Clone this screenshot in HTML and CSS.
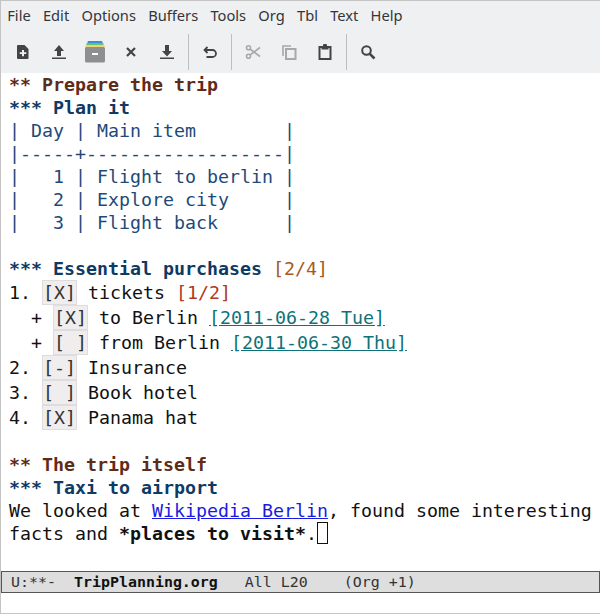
FILE: index.html
```html
<!DOCTYPE html>
<html lang="en">
<head>
<meta charset="utf-8">
<title>TripPlanning.org</title>
<link rel="stylesheet" href="styles.css">
</head>
<body>
<div class="window">
  <nav class="menubar">
    <span class="menu">File</span><span class="menu">Edit</span><span class="menu">Options</span><span class="menu">Buffers</span><span class="menu">Tools</span><span class="menu">Org</span><span class="menu">Tbl</span><span class="menu">Text</span><span class="menu">Help</span>
  </nav>
  <div class="toolbar">
    <span class="tool"><svg width="16" height="16" viewBox="0 0 16 16"><path class="dark" fill-rule="evenodd" d="M2.500 1h7l4 4v9a1 1 0 0 1-1 1h-9.500a1 1 0 0 1-1-1V2a1 1 0 0 1 1-1zM7 6v2.300H4.700v1.700H7v2.300h2V10h2.300V8.300H9V6z"/></svg></span>
    <span class="tool"><svg width="16" height="16" viewBox="0 0 16 16"><path class="dark" d="M8 1l5 6H10v5H6V7H3zM1 13.500h14V15H1z"/></svg></span>
    <span class="tool"><svg width="22" height="22" viewBox="0 0 22 22"><rect x="3.500" y="0" width="15" height="3" rx="1" fill="#3d8fd1"/><rect x="2.500" y="2" width="17" height="2" fill="#5cc48a"/><rect x="1.500" y="4" width="19" height="3" fill="#f2d46b"/><rect x="1" y="6" width="20" height="15.500" rx="1.500" fill="#8f8f8f"/><rect x="8" y="12" width="6" height="2" fill="#fff"/></svg></span>
    <span class="tool"><svg width="12" height="12" viewBox="0 0 12 12"><path d="M2 2l8 8M10 2l-8 8" stroke="#444" stroke-width="2.200" fill="none"/></svg></span>
    <span class="tool"><svg width="16" height="16" viewBox="0 0 16 16"><path class="dark" d="M6 1h4v6h3l-5 5.500L3 7h3zM1 13.500h14V15H1z"/></svg></span>
    <span class="sep"></span>
    <span class="tool"><svg width="16" height="16" viewBox="0 0 16 16"><path d="M5.500 3L2.500 6l3 3M3 6h7.500a3.300 3.300 0 0 1 0 7H4.500" stroke="#444" stroke-width="1.800" fill="none"/></svg></span>
    <span class="sep"></span>
    <span class="tool"><svg width="16" height="16" viewBox="0 0 16 16"><g stroke="#a8a8a8" stroke-width="1.600" fill="none"><circle cx="3.500" cy="3.800" r="2"/><circle cx="3.500" cy="12.200" r="2"/><path d="M5 5l10 7.500M5 11L15 3.500"/></g></svg></span>
    <span class="tool"><svg width="16" height="16" viewBox="0 0 16 16"><path d="M10 2H2v10" stroke="#a8a8a8" stroke-width="1.600" fill="none"/><rect x="5" y="5" width="9.500" height="10" stroke="#a8a8a8" stroke-width="2" fill="none"/></svg></span>
    <span class="tool"><svg width="16" height="16" viewBox="0 0 16 16"><rect x="2.500" y="3" width="11" height="12" stroke="#444" stroke-width="2" fill="none"/><path class="dark" d="M6 1.500a2 2 0 0 1 4 0V3h1.500v2.500h-7V3H6z"/></svg></span>
    <span class="sep"></span>
    <span class="tool"><svg width="16" height="16" viewBox="0 0 16 16"><circle cx="6.500" cy="6.500" r="4.300" stroke="#444" stroke-width="2" fill="none"/><path d="M9.800 9.800l4.700 4.700" stroke="#444" stroke-width="2.600"/></svg></span>
  </div>
  <main class="buffer">
    <div class="line"><span class="h2">** Prepare the trip</span></div>
    <div class="line"><span class="h3">*** Plan it</span></div>
    <div class="line tbl">| Day | Main item        |</div>
    <div class="line tbl">|-----+------------------|</div>
    <div class="line tbl">|   1 | Flight to berlin |</div>
    <div class="line tbl">|   2 | Explore city     |</div>
    <div class="line tbl">|   3 | Flight back      |</div>
    <div class="line"></div>
    <div class="line"><span class="h3">*** Essential purchases</span> <span class="cookie-o">[2/4]</span></div>
    <div class="line item">1. <span class="box">[X]</span> tickets <span class="cookie-r">[1/2]</span></div>
    <div class="line item">  + <span class="box">[X]</span> to Berlin <a class="date">[2011-06-28 Tue]</a></div>
    <div class="line item">  + <span class="box">[ ]</span> from Berlin <a class="date">[2011-06-30 Thu]</a></div>
    <div class="line item">2. <span class="box">[-]</span> Insurance</div>
    <div class="line item">3. <span class="box">[ ]</span> Book hotel</div>
    <div class="line item">4. <span class="box">[X]</span> Panama hat</div>
    <div class="line"></div>
    <div class="line"><span class="h2">** The trip itself</span></div>
    <div class="line"><span class="h3">*** Taxi to airport</span></div>
    <div class="line">We looked at <a class="link">Wikipedia Berlin</a>, found some interesting</div>
    <div class="line">facts and <b>*places to visit*</b>.<span class="cursor"></span></div>
  </main>
  <div class="modeline">U:**-  <b>TripPlanning.org</b>   All L20    (Org +1)</div>
</div>
</body>
</html>
```
FILE: styles.css
```css
html, body { margin: 0; padding: 0; background: #fff; }
.window {
  width: 600px; height: 614px; box-sizing: border-box;
  display: flex; flex-direction: column; overflow: hidden;
  border-top: 1px solid #c4c4c4; border-bottom: 1px solid #c4c4c4; border-left: 1px solid #c4c4c4;
}
.menubar {
  height: 28px; flex: none; background: #eff0f1; display: flex; align-items: center;
  font: 14.670px "Noto Sans", sans-serif; color: #31363b;
}
.menu { padding: 0 6px 0 6.250px; }
.toolbar { height: 42px; flex: none; background: #eff0f1; display: flex; align-items: stretch; padding: 2px 0 0 4px; }
.tool { width: 36px; display: flex; align-items: center; justify-content: center; }
.sep { width: 1px; margin: 3px 3px; background: #bdbebf; }
.dark { fill: #444; }
.buffer {
  flex: 1; padding: 0 0 0 8px; background: #fff; color: #111;
  font: 18.270px/23px "DejaVu Sans Mono", monospace;
}
.line { height: 23px; white-space: pre; }
.item { height: 25px; line-height: 25px; }
.h2 { color: #5f2c18; font-weight: bold; }
.h3 { color: #0f3a64; font-weight: bold; }
.tbl { color: #1e4a78; }
.cookie-o { color: #a65a1c; }
.cookie-r { color: #b03a20; }
.box { display: inline-block; height: 23px; line-height: 23px; background: #efeded; border: 1px solid #dedcdc; color: #333; }
.date { color: #0f7278; text-decoration: underline; }
.link { color: #1a1ae0; text-decoration: underline; }
.cursor { display: inline-block; width: 9px; height: 20px; border: 1px solid #111; vertical-align: -4px; }
.modeline {
  height: 20px; flex: none; margin-bottom: 20px; border: 1px solid #555; background: #dedede;
  font: 14.950px/20px "DejaVu Sans Mono", monospace; white-space: pre; padding-left: 9px; color: #333;
}
.modeline b { color: #111; }
```
